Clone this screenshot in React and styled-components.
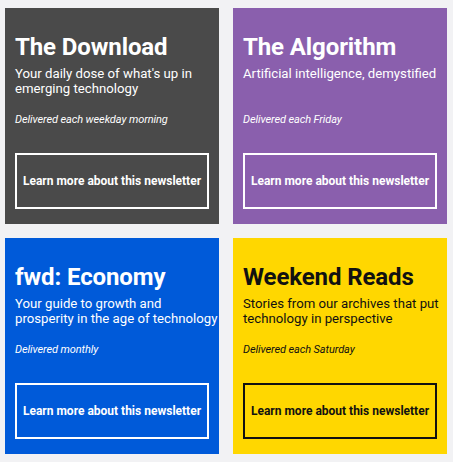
import styled, { createGlobalStyle } from "styled-components";

const GlobalStyle = createGlobalStyle`
  html, body {
    margin: 0;
    padding: 0;
    background: #f2f2f4;
    font-family: Roboto, "Liberation Sans", Arial, sans-serif;
  }
  * { box-sizing: border-box; }
`;

const Grid = styled.div`
  display: grid;
  grid-template-columns: 214px 214px;
  column-gap: 14px;
  row-gap: 14px;
  padding: 8px 6px 9px 5px;
`;

const Card = styled.div`
  background: ${(p) => p.$bg};
  color: ${(p) => p.$fg};
  height: 216px;
  padding: 25px 0 15px 10px;
  display: flex;
  flex-direction: column;
`;

const Title = styled.h2`
  margin: 0;
  font-size: 24px;
  line-height: 28px;
  font-weight: 700;
  letter-spacing: -0.1px;
`;

const Subtitle = styled.p`
  margin: 5px 0 0 0;
  font-size: 13.2px;
  line-height: 15px;
  min-height: 30px;
  font-weight: 400;
`;

const Delivery = styled.p`
  margin: 17px 0 0 0;
  font-size: 11px;
  line-height: 13px;
  font-style: italic;
  letter-spacing: -0.1px;
`;

const LearnButton = styled.a`
  margin-top: auto;
  margin-right: 10px;
  height: 56px;
  border: 2px solid ${(p) => p.$fg};
  display: flex;
  align-items: center;
  justify-content: center;
  font-size: 12px;
  font-weight: 700;
  color: inherit;
  text-decoration: none;
  cursor: pointer;
`;

const newsletters = [
  {
    title: "The Download",
    sub: "Your daily dose of what's up in emerging technology",
    when: "Delivered each weekday morning",
    bg: "#4a4a4a",
    fg: "#ffffff",
  },
  {
    title: "The Algorithm",
    sub: "Artificial intelligence, demystified",
    when: "Delivered each Friday",
    bg: "#8a5fad",
    fg: "#ffffff",
  },
  {
    title: "fwd: Economy",
    sub: "Your guide to growth and prosperity in the age of technology",
    when: "Delivered monthly",
    bg: "#005ad9",
    fg: "#ffffff",
  },
  {
    title: "Weekend Reads",
    sub: "Stories from our archives that put technology in perspective",
    when: "Delivered each Saturday",
    bg: "#ffd700",
    fg: "#111111",
  },
];

export default function App() {
  return (
    <>
      <GlobalStyle />
      <Grid>
        {newsletters.map((n) => (
          <Card key={n.title} $bg={n.bg} $fg={n.fg}>
            <Title>{n.title}</Title>
            <Subtitle>{n.sub}</Subtitle>
            <Delivery>{n.when}</Delivery>
            <LearnButton $fg={n.fg}>Learn more about this newsletter</LearnButton>
          </Card>
        ))}
      </Grid>
    </>
  );
}
